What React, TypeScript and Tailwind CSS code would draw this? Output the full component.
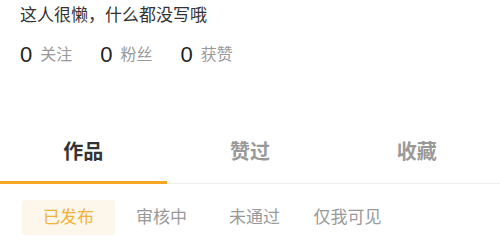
import React from 'react'

const stats = [
  { n: 0, label: '关注' },
  { n: 0, label: '粉丝' },
  { n: 0, label: '获赞' },
]

const tabs = ['作品', '赞过', '收藏']
const subTabs = ['已发布', '审核中', '未通过', '仅我可见']

export default function App() {
  return (
    <div className="w-[500px] h-[251px] overflow-hidden bg-white font-['Liberation_Sans','Noto_Sans_CJK_SC',sans-serif]">
      {/* Bio + stats */}
      <div className="px-5 pt-[4px]">
        <p className="text-[17px] leading-[24px] text-[#333]">这人很懒，什么都没写哦</p>
        <div className="mt-[13px] flex h-[28px] items-center gap-[28px]">
          {stats.map((s) => (
            <div key={s.label} className="flex items-center">
              <span className="text-[22px] leading-[28px] text-[#222]">{s.n}</span>
              <span className="ml-[8px] text-[16px] leading-[28px] text-[#999]">{s.label}</span>
            </div>
          ))}
        </div>
      </div>

      {/* Tabs */}
      <div className="mt-[54px] flex border-b border-[#eeeeee]">
        {tabs.map((t, i) => (
          <div key={t} className="relative flex flex-1 justify-center pt-[15px] pb-[17px]">
            <span
              className={
                i === 0
                  ? 'text-[20px] font-bold leading-[28px] text-[#333]'
                  : 'text-[20px] font-bold leading-[28px] text-[#999]'
              }
            >
              {t}
            </span>
            {i === 0 && <div className="absolute bottom-[-1px] left-0 right-0 h-[3px] bg-[#f5a623]" />}
          </div>
        ))}
      </div>

      {/* Sub tabs */}
      <div className="mt-[16px] flex pl-[22px]">
        {subTabs.map((t, i) => (
          <div
            key={t}
            className={
              i === 0
                ? 'flex h-[35px] w-[93px] items-center justify-center rounded-[3px] bg-[#fdf6ea] text-[17px] text-[#f0b23c]'
                : 'flex h-[35px] w-[93px] items-center justify-center text-[17px] text-[#999]'
            }
          >
            {t}
          </div>
        ))}
      </div>
    </div>
  )
}
